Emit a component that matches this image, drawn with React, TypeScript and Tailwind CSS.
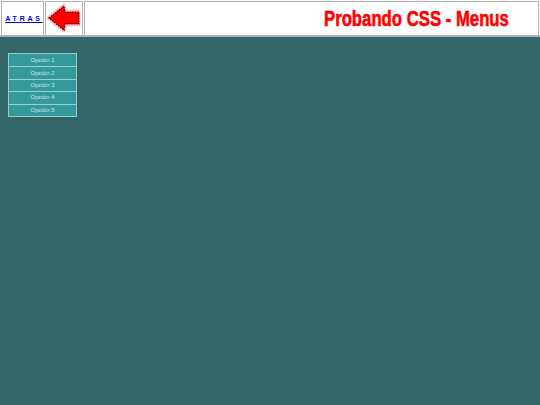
const options = ['Opción 1', 'Opción 2', 'Opción 3', 'Opción 4', 'Opción 5']

export default function App() {
  return (
    <div className="h-[405px] w-[540px] overflow-hidden bg-[#336666] font-['Liberation_Sans',sans-serif]">
      <header className="flex h-[37px] gap-px border-b-2 border-[#b0b0b0] bg-white pt-px pl-px pr-px">
        <div className="flex h-[34px] w-[43px] shrink-0 items-center justify-center border border-b-0 border-[#b0b0b0] pt-px pl-[3px]">
          <a href="#" className="text-[7px] font-bold tracking-[2.75px] text-[#0000ee] underline">
            ATRAS
          </a>
        </div>
        <div className="flex h-[34px] w-[38px] shrink-0 items-center justify-center border border-b-0 border-[#b0b0b0] pb-[1px]">
          <svg width="34" height="30" viewBox="0 0 34 30">
            <path d="M1 15 L17 2 L19 8 L32 8 L32 22 L19 22 L17 28 Z" fill="#ff0000" stroke="#ffc0c0" strokeWidth="3" strokeLinejoin="round" />
            <path d="M2 15 L17 3 L18 9 L32 9 L32 21 L18 21 L17 27 Z" fill="#ff0000" stroke="#300000" strokeWidth="1.2" strokeDasharray="1.5 1" />
          </svg>
        </div>
        <div className="flex h-[34px] min-w-0 flex-1 items-center border border-b-0 border-[#b0b0b0] pl-[239px]">
          <h1 className="origin-left scale-x-[0.76] whitespace-nowrap text-[22px] leading-none font-bold text-[#ff0000] [-webkit-text-stroke:0.6px_#ff0000]">
            Probando CSS - Menus
          </h1>
        </div>
      </header>
      <nav className="mt-4 ml-2 w-[69px] border border-[#99cccc] bg-[#339999]">
        {options.map((option, i) => (
          <div
            key={option}
            className={`flex h-[12.4px] items-center justify-center text-[6px] text-[#cce6e6] ${i > 0 ? 'border-t border-[#99cccc]' : ''}`}
          >
            {option}
          </div>
        ))}
      </nav>
    </div>
  )
}
